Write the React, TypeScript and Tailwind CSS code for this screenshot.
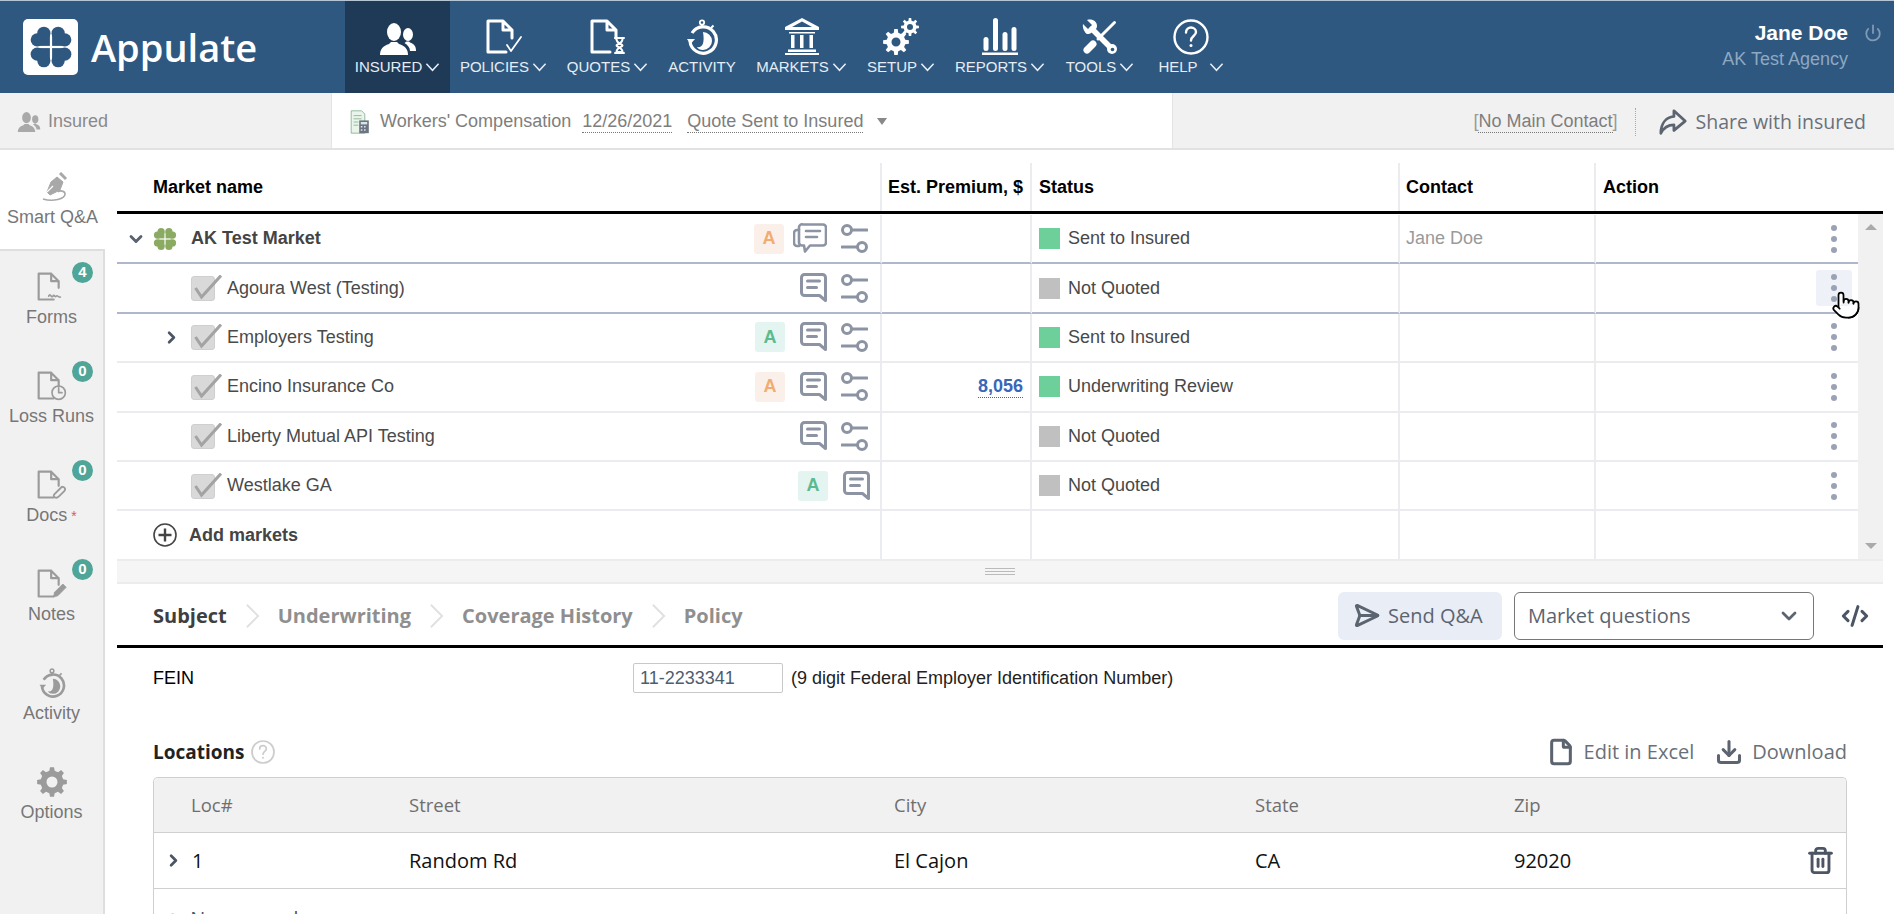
import { ChevronDown, ChevronRight, CodeXml, Download, File, Pointer, Power, SendHorizontal, Trash2 } from 'lucide-react'
import type { ReactNode } from 'react'

// builds a cog outline, used by the SETUP and Options icons
function gear(cx: number, cy: number, outer: number, inner: number, hole: number, teeth: number) {
  const pts: string[] = []
  const step = (Math.PI * 2) / teeth
  for (let i = 0; i < teeth; i++) {
    const a = i * step
    const list: [number, number][] = [
      [a - step * 0.3, inner],
      [a - step * 0.17, outer],
      [a + step * 0.17, outer],
      [a + step * 0.3, inner],
    ]
    list.forEach(([t, r]) => pts.push(`${(cx + Math.cos(t) * r).toFixed(2)} ${(cy + Math.sin(t) * r).toFixed(2)}`))
  }
  return `M${pts.join('L')}Z M${cx + hole} ${cy}a${hole} ${hole} 0 1 0 ${-hole * 2} 0a${hole} ${hole} 0 1 0 ${hole * 2} 0Z`
}

function Clover({ color, className }: { color: string; className: string }) {
  const leaf = (
    <g fill={color}>
      <circle cx="13.5" cy="7.5" r="6" />
      <circle cx="7.5" cy="13.5" r="6" />
      <rect x="8" y="8" width="11" height="11" />
    </g>
  )
  return (
    <svg viewBox="0 0 40 40" className={className}>
      {[0, 90, 180, 270].map((r) => (
        <g key={r} transform={`rotate(${r} 20 20)`}>
          {leaf}
        </g>
      ))}
    </svg>
  )
}

function UsersIcon({ className }: { className: string }) {
  return (
    <svg viewBox="0 0 36 32" fill="currentColor" className={className}>
      <ellipse cx="14" cy="9" rx="7" ry="9" />
      <path d="M0 32c0-6 3-9 9-11l2-2h6l2 2c6 2 9 5 9 11z" />
      <ellipse cx="28" cy="11.5" rx="5" ry="6.5" />
      <path d="M30 28h6c0-5-2-7-6-8.500l-1-1h-2.500l-2 1.500c3 2 5.500 4.500 5.500 8z" />
    </svg>
  )
}

function DocBase({ children, className, sw = 3 }: { children?: ReactNode; className: string; sw?: number }) {
  return (
    <svg viewBox="0 0 36 36" fill="none" stroke="currentColor" strokeLinecap="round" strokeLinejoin="round" className={className}>
      <path d="M20 33H2V2h15l9 9v8M17 2v9h9" strokeWidth={sw} />
      {children}
    </svg>
  )
}

function Stopwatch({ className }: { className: string }) {
  return (
    <svg viewBox="0 0 32 36" fill="none" stroke="currentColor" className={className}>
      <circle cx="16" cy="3.500" r="2.200" strokeWidth="1.800" />
      <path d="M16 6v3M25 9l2.500-2.500" strokeWidth="2" />
      <path d="M6 14a13.200 13.200 0 1 1-2 8" strokeWidth="3.200" />
      <path d="M1 20l3.500 5L9 20z" fill="currentColor" stroke="none" />
      <path d="M17 13a9 9 0 0 1 0 18c-3 0-5-1-6-3 5 1 8-3 6-15z" fill="currentColor" stroke="none" />
    </svg>
  )
}

function BankIcon({ className }: { className: string }) {
  return (
    <svg viewBox="0 0 34 37" fill="currentColor" className={className}>
      <path d="M17 0L34 9v3H0V9zM17 3.500L7 9h20z" fillRule="evenodd" />
      <path d="M4 14h26v1.500H4zM6 17h3.500v13H6zM15 17h3.500v13H15zM24.500 17H28v13h-3.500zM3 31.500h28V34H3zM0 35h34v2H0z" />
    </svg>
  )
}

function GearsIcon({ className }: { className: string }) {
  return (
    <svg viewBox="0 0 36 37" fill="currentColor" className={className}>
      <path fillRule="evenodd" d={gear(13, 24, 13, 9.500, 4.500, 8)} />
      <path fillRule="evenodd" d={gear(27, 9, 9, 6.500, 3, 8)} />
    </svg>
  )
}

function BarsIcon({ className }: { className: string }) {
  return (
    <svg viewBox="0 0 36 37" fill="currentColor" className={className}>
      <rect x="1.500" y="19" width="5" height="14" rx="2.500" />
      <rect x="11" y="0" width="5" height="33" rx="2.500" />
      <rect x="20.500" y="14" width="5" height="19" rx="2.500" />
      <rect x="29.500" y="9" width="5" height="24" rx="2.500" />
      <rect x="0" y="34.500" width="36" height="2.500" />
    </svg>
  )
}

function ToolsIcon({ className }: { className: string }) {
  return (
    <svg viewBox="0 0 36 36" fill="none" stroke="currentColor" strokeLinecap="round" className={className}>
      <path d="M32.500 3.500L16 20" strokeWidth="3" />
      <path d="M11 25L5 31" strokeWidth="7" />
      <path d="M10 10l20 20" strokeWidth="5.500" />
      <path d="M1 5l5 5 4-4-5-5c5-1.500 10 1 10 6 0 1-.3 2-1 3l-5 4c-1 .6-2 1-3.500 1C4 15 0 10 1 5z" fill="currentColor" stroke="none" />
      <circle cx="30" cy="30" r="5" fill="currentColor" stroke="none" />
      <circle cx="30.500" cy="30.500" r="1.800" fill="#2f5880" stroke="none" />
    </svg>
  )
}

function HelpIcon({ className, sw = 2.4 }: { className: string; sw?: number }) {
  return (
    <svg viewBox="0 0 36 36" fill="none" stroke="currentColor" strokeLinecap="round" className={className}>
      <circle cx="18" cy="18" r="16.500" strokeWidth={sw} />
      <path d="M13 13.500c0-3 2.300-5 5-5s5 2 5 4.500c0 4-5 4-5 8.500" strokeWidth={sw} />
      <circle cx="18" cy="26.500" r="1.500" fill="currentColor" stroke="none" />
    </svg>
  )
}

function CommentIcon({ className }: { className: string }) {
  return (
    <svg viewBox="0 0 27 30" fill="none" stroke="#8c93a3" strokeWidth="3" strokeLinecap="round" strokeLinejoin="round" className={className}>
      <path d="M4.500 1.500h18a3 3 0 0 1 3 3v23l-6-5h-15a3 3 0 0 1-3-3v-15a3 3 0 0 1 3-3z" />
      <path d="M7.500 8h12M7.500 14.500h9" />
    </svg>
  )
}

function CommentsIcon({ className }: { className: string }) {
  return (
    <svg viewBox="0 0 34 31" fill="none" stroke="#8c93a3" strokeWidth="2.600" strokeLinecap="round" strokeLinejoin="round" className={className}>
      <path d="M10 1.500h20a3 3 0 0 1 3 3v15a3 3 0 0 1-3 3H17l-5 6-1-6H9a3 3 0 0 1-3-3v-15a3 3 0 0 1 4-3z" />
      <path d="M6 7H4a3 3 0 0 0-3 3v10a3 3 0 0 0 3 3h2" />
      <path d="M13 8h14M13 14h11" />
    </svg>
  )
}

function SliderIcon({ className }: { className: string }) {
  return (
    <svg viewBox="0 0 27 29" fill="none" stroke="#8c93a3" strokeWidth="3" strokeLinecap="round" className={className}>
      <circle cx="6" cy="6" r="4.500" />
      <path d="M11 6h15M1 23h15" />
      <circle cx="21" cy="23" r="4.500" />
    </svg>
  )
}

function CheckIcon() {
  return (
    <svg viewBox="0 0 31 26" className="h-[26px] w-[31px]" fill="none">
      <rect x="0.500" y="1.500" width="23" height="24" rx="2.500" fill="#d9d9d9" stroke="#cfcfcf" />
      <path d="M4.500 13l6 9L30 0.500" stroke="#a3a3a3" strokeWidth="3" />
    </svg>
  )
}

function NavChevron() {
  return (
    <svg viewBox="0 0 16 10" className="ml-[3px] h-[10px] w-[15px]" fill="none" stroke="currentColor" strokeWidth="1.600">
      <path d="M1.500 1.500L8 8.500l6.500-7" />
    </svg>
  )
}

const NAV = [
  { label: 'INSURED', w: 'w-[105px]', active: true, icon: <UsersIcon className="h-[32px] w-[36px]" /> },
  {
    label: 'POLICIES',
    w: 'w-[107px]',
    icon: (
      <DocBase className="h-[36px] w-[36px]">
        <path d="M21 26l4 6L35 18" strokeWidth="1.800" />
      </DocBase>
    ),
  },
  {
    label: 'QUOTES',
    w: 'w-[101px]',
    icon: (
      <DocBase className="h-[36px] w-[36px]">
        <path d="M25 19h9M25 34h9M26.500 20c0 5 6 5 6 6.500s-6 1.500-6 6.500h6c0-5-6-5-6-6.500s6-1.500 6-6.500" strokeWidth="2" />
      </DocBase>
    ),
  },
  { label: 'ACTIVITY', w: 'w-[88px]', noChevron: true, icon: <Stopwatch className="h-[36px] w-[32px]" /> },
  { label: 'MARKETS', w: 'w-[111px]', icon: <BankIcon className="h-[37px] w-[34px]" /> },
  { label: 'SETUP', w: 'w-[88px]', icon: <GearsIcon className="h-[37px] w-[36px]" /> },
  { label: 'REPORTS', w: 'w-[110px]', icon: <BarsIcon className="h-[37px] w-[36px]" /> },
  { label: 'TOOLS', w: 'w-[90px]', icon: <ToolsIcon className="h-[36px] w-[36px]" /> },
  { label: 'HELP', w: 'w-[92px]', wide: true, icon: <HelpIcon className="h-[36px] w-[36px]" /> },
]

type Row = {
  name: string
  leaf: boolean
  expand?: boolean
  badge?: 'orange' | 'green'
  slider?: boolean
  premium?: string
  status: string
  done: boolean
  contact?: string
  line: string
}

const ROWS: Row[] = [
  { name: 'AK Test Market', leaf: false, badge: 'orange', slider: true, status: 'Sent to Insured', done: true, contact: 'Jane Doe', line: 'border-[#aeb7cb]' },
  { name: 'Agoura West (Testing)', leaf: true, slider: true, status: 'Not Quoted', done: false, line: 'border-[#aeb7cb]' },
  { name: 'Employers Testing', leaf: true, expand: true, badge: 'green', slider: true, status: 'Sent to Insured', done: true, line: 'border-[#eaecf0]' },
  { name: 'Encino Insurance Co', leaf: true, badge: 'orange', slider: true, premium: '8,056', status: 'Underwriting Review', done: true, line: 'border-[#eaecf0]' },
  { name: 'Liberty Mutual API Testing', leaf: true, slider: true, status: 'Not Quoted', done: false, line: 'border-[#eaecf0]' },
  { name: 'Westlake GA', leaf: true, badge: 'green', status: 'Not Quoted', done: false, line: 'border-[#eaecf0]' },
]

const COLS = 'grid grid-cols-[765px_150px_368px_196px_262px]'

function Dots() {
  return (
    <div className="flex flex-col gap-[5px]">
      <span className="h-[6px] w-[6px] rounded-full bg-[#9aa3b5]" />
      <span className="h-[6px] w-[6px] rounded-full bg-[#9aa3b5]" />
      <span className="h-[6px] w-[6px] rounded-full bg-[#9aa3b5]" />
    </div>
  )
}

function MarketRow({ row, hover }: { row: Row; hover: boolean }) {
  const cell = `h-[49.4px] border-b-2 border-r-2 border-r-[#eaecf0] ${row.line}`
  return (
    <div className={COLS}>
      <div className={`${cell} flex items-center`}>
        {row.leaf ? (
          <>
            <div className="flex w-[74px] justify-end pr-[10px] text-[#4c5564]">
              {row.expand && <ChevronRight size={19} strokeWidth={3.4} />}
            </div>
            <div className="w-[36px]">
              <CheckIcon />
            </div>
            <span className="text-[18px] text-[#4a4a4a]">{row.name}</span>
          </>
        ) : (
          <>
            <div className="w-[36px] pl-[9px] text-[#5a6270]">
              <ChevronDown size={20} strokeWidth={3.4} />
            </div>
            <div className="w-[38px]">
              <Clover color="#8bab62" className="h-[24px] w-[24px]" />
            </div>
            <span className="text-[18px] font-bold text-[#444]">{row.name}</span>
          </>
        )}
        <div className={`ml-auto flex items-center ${row.slider ? 'pr-[12px]' : 'pr-[10px]'}`}>
          {row.badge && (
            <span
              className={`flex h-[30px] w-[30px] items-center justify-center rounded-[3px] text-[18px] font-bold ${
                row.badge === 'orange' ? 'bg-[#fbf0e9] text-[#f2ac72]' : 'bg-[#e3f4f1] text-[#5dba8e]'
              } ${row.leaf ? 'mr-[15px]' : 'mr-[9px]'}`}
            >
              A
            </span>
          )}
          {row.leaf ? <CommentIcon className="h-[30px] w-[27px]" /> : <CommentsIcon className="h-[31px] w-[34px]" />}
          {row.slider && <SliderIcon className="ml-[14px] h-[29px] w-[27px]" />}
        </div>
      </div>
      <div className={`${cell} flex items-center justify-end pr-[7px]`}>
        {row.premium && <span className="border-b border-dotted border-[#3a66b8] text-[18px] font-bold leading-[22px] text-[#3a66b8]">{row.premium}</span>}
      </div>
      <div className={`${cell} flex items-center gap-[8px] pl-[7px]`}>
        <span className={`h-[21px] w-[21px] ${row.done ? 'bg-[#6dcf9a]' : 'bg-[#c0c0c0]'}`} />
        <span className="text-[18px] text-[#484848]">{row.status}</span>
      </div>
      <div className={`${cell} flex items-center pl-[6px] text-[18px] text-[#9a9a9a]`}>{row.contact}</div>
      <div className={`h-[49.4px] border-b-2 ${row.line} relative flex items-center justify-end pr-[6px]`}>
        <div className={`flex h-[36px] w-[36px] items-center justify-center rounded-[3px] ${hover ? 'bg-[#eef1f7]' : ''}`}>
          <Dots />
        </div>
        {hover && <Pointer size={30} strokeWidth={1.4} className="absolute left-[235px] top-[26px] fill-white text-black" />}
      </div>
    </div>
  )
}

const SIDE = [
  { label: 'Forms', count: 4, icon: <path d="M14 29c2-5 3 3 5 0s2 2 4 0 2 2 5 1" strokeWidth="2" /> },
  {
    label: 'Loss Runs',
    count: 0,
    icon: (
      <>
        <circle cx="26" cy="26" r="8" strokeWidth="2" />
        <path d="M26 21v5h4" strokeWidth="2" />
      </>
    ),
  },
  { label: 'Docs', count: 0, star: true, icon: <path d="M30 20l-9 9c-3 3 2 6 5 3l7-7c2-3-1-6-4-4l-8 8" strokeWidth="2.200" /> },
  { label: 'Notes', count: 0, icon: <path d="M20 33l1-5 10-10 4 4-10 10z" fill="currentColor" strokeWidth="1" /> },
]

function Sidebar() {
  return (
    <aside className="flex w-[105px] shrink-0 flex-col">
      <div className="flex h-[99px] flex-col items-center bg-white pt-[22px] text-[#8a8a8a]">
        <svg viewBox="0 0 30 30" className="h-[30px] w-[30px]" fill="none" stroke="#a8a8a8">
          <path d="M19 5l6 5-3 8-10 5-3-3 4-10z" fill="#a8a8a8" />
          <path d="M22 1l6 6" strokeWidth="3" />
          <path d="M9 20l6-6" stroke="#fff" strokeWidth="1.200" />
          <path d="M5 27c10 3 22 0 22-5 0-3-5-4-7-2" strokeWidth="1.600" />
        </svg>
        <span className="mt-[5px] text-[18px] leading-[20px] text-[#777]">Smart Q&amp;A</span>
      </div>
      <div className="flex-1 border-r-2 border-t-2 border-[#dedede] bg-[#f2f1f2] pt-[1px]">
        {SIDE.map((s) => (
          <div key={s.label} className="relative flex h-[99px] flex-col items-center pt-[20px] text-[#9b9b9b]">
            <span className="absolute left-[72px] top-[10px] flex h-[21px] w-[21px] items-center justify-center rounded-full bg-[#4fa598] text-[15px] font-bold text-white">
              {s.count}
            </span>
            <DocBase className="h-[30px] w-[30px]" sw={2.600}>
              {s.icon}
            </DocBase>
            <span className="mt-[5px] text-[18px] leading-[20px] text-[#777]">
              {s.label}
              {s.star && <span className="ml-[4px] text-[14px] text-[#e05a4a]">*</span>}
            </span>
          </div>
        ))}
        <div className="flex h-[99px] flex-col items-center pt-[20px] text-[#9b9b9b]">
          <Stopwatch className="h-[30px] w-[30px]" />
          <span className="mt-[5px] text-[18px] leading-[20px] text-[#777]">Activity</span>
        </div>
        <div className="flex h-[99px] flex-col items-center pt-[20px]">
          <svg viewBox="0 0 30 30" className="h-[30px] w-[30px]" fill="#9b9b9b">
            <path fillRule="evenodd" d={gear(15, 15, 15, 11.500, 5.500, 8)} />
          </svg>
          <span className="mt-[5px] text-[18px] leading-[20px] text-[#777]">Options</span>
        </div>
      </div>
    </aside>
  )
}

function TabArrow() {
  return (
    <svg viewBox="0 0 16 28" className="mx-[18px] h-[28px] w-[15px]" fill="none" stroke="#e0e0e0" strokeWidth="2">
      <path d="M2 2l12 12L2 26" />
    </svg>
  )
}

export default function App() {
  return (
    <div className="flex h-[914px] w-[1894px] flex-col overflow-hidden bg-white font-['Liberation_Sans',sans-serif]">
      <header className="flex h-[93px] shrink-0 border-t border-[#b4c5d6] bg-[#2f5880] text-white">
        <div className="flex w-[345px] shrink-0 items-center pl-[23px]">
          <div className="flex h-[56px] w-[55px] items-center justify-center rounded-[5px] bg-white">
            <Clover color="#2f5880" className="h-[44px] w-[44px]" />
          </div>
          <span className="ml-[13px] font-['Open_Sans',sans-serif] text-[38px] font-semibold leading-none">Appulate</span>
        </div>
        {NAV.map((n) => (
          <div key={n.label} className={`flex ${n.w} shrink-0 flex-col items-center ${n.active ? 'bg-[#1f3a57]' : ''}`}>
            <div className="mt-[17px] flex h-[37px] items-end">{n.icon}</div>
            <div className="mt-[2px] flex items-center text-[15px] leading-[20px] text-[#e6edf4]">
              {n.label}
              {!n.noChevron && <span className={n.wide ? 'ml-[8px]' : ''}><NavChevron /></span>}
            </div>
          </div>
        ))}
        <div className="ml-auto flex pr-[12px] pt-[19px]">
          <div className="flex flex-col items-end">
            <span className="text-[21px] font-bold leading-[26px]">Jane Doe</span>
            <span className="text-[18px] leading-[26px] text-[#8ea8c2]">AK Test Agency</span>
          </div>
          <Power size={18} strokeWidth={2.400} className="ml-[16px] mt-[4px] text-[#7f9ab5]" />
        </div>
      </header>

      <div className="flex h-[57px] shrink-0 border-b-2 border-[#e2e2e2] bg-[#f2f1f2] pt-[2px] text-[18px] text-[#7e7e7e]">
        <div className="flex w-[331px] items-center pl-[17px]">
          <UsersIcon className="h-[20px] w-[24px] text-[#a9a9a9]" />
          <span className="ml-[7px] text-[#8a8a8a]">Insured</span>
        </div>
        <div className="-mt-[2px] flex w-[842px] items-center border-l border-r border-[#e4e4e4] bg-white pl-[16px] pt-[2px]">
          <svg viewBox="0 0 24 30" className="h-[24px] w-[24px]">
            <path d="M1 1h13l4 4v24H1z" fill="#eaf4ea" stroke="#7fb08a" />
            <path d="M4 7h10M4 11h10M4 15h6M4 19h6" stroke="#7fb08a" />
            <rect x="11" y="13" width="12" height="16" fill="#6b7480" />
            <rect x="13" y="15" width="8" height="3" fill="#dbe4ea" />
            <path d="M13 21h2M17 21h2M13 25h2M17 25h2" stroke="#dbe4ea" strokeWidth="2" />
          </svg>
          <span className="ml-[8px]">Workers' Compensation</span>
          <span className="ml-[11px] border-b border-dotted border-[#777] leading-[21px]">12/26/2021</span>
          <span className="ml-[15px] border-b border-dotted border-[#777] leading-[21px]">Quote Sent to Insured</span>
          <span className="ml-[14px] h-0 w-0 border-x-[5.500px] border-t-[7px] border-x-transparent border-t-[#888]" />
        </div>
        <div className="flex flex-1 items-center justify-end pr-[28px]">
          <span className="text-[#9a9a9a]">[</span>
          <span className="border-b border-dotted border-[#777] leading-[21px]">No Main Contact</span>
          <span className="text-[#9a9a9a]">]</span>
          <span className="ml-[17px] mr-[23px] h-[28px] border-l border-dotted border-[#aaa]" />
          <svg viewBox="0 0 30 28" className="mr-[9px] h-[28px] w-[28px]" fill="none" stroke="#5c6470" strokeWidth="3" strokeLinejoin="round">
            <path d="M16 2l12 11-12 10v-6C10 17 5 20 2 26 2 15 8 9 16 8z" />
          </svg>
          <span className="font-['Open_Sans',sans-serif] text-[19.5px] text-[#6a7078]">Share with insured</span>
        </div>
      </div>

      <div className="flex min-h-0 flex-1">
        <Sidebar />
        <main className="min-w-0 flex-1 pl-[12px] pr-[11px]">
          <div className={`${COLS} h-[64px] border-b-[3px] border-black pt-[13px] text-[18px] font-bold text-black`}>
            <div className="flex h-[48px] items-center border-r-2 border-[#eaecf0] pl-[36px]">Market name</div>
            <div className="flex h-[48px] items-center border-r-2 border-[#eaecf0] pl-[6px]">Est. Premium, $</div>
            <div className="flex h-[48px] items-center border-r-2 border-[#eaecf0] pl-[7px]">Status</div>
            <div className="flex h-[48px] items-center border-r-2 border-[#eaecf0] pl-[6px]">Contact</div>
            <div className="flex h-[48px] items-center pl-[7px]">Action</div>
          </div>

          <div className="flex h-[345px]">
            <div className="w-[1741px] shrink-0 pt-[1px]">
              {ROWS.map((r, i) => (
                <MarketRow key={r.name} row={r} hover={i === 1} />
              ))}
              <div className={COLS}>
                <div className="flex h-[48px] items-center border-r-2 border-[#eaecf0] pl-[36px]">
                  <svg viewBox="0 0 24 24" className="h-[24px] w-[24px]" fill="none" stroke="#444">
                    <circle cx="12" cy="12" r="11" strokeWidth="1.600" />
                    <path d="M12 5.500v13M5.500 12h13" strokeWidth="2.400" />
                  </svg>
                  <span className="ml-[12px] text-[18px] font-bold text-[#444]">Add markets</span>
                </div>
                <div className="h-[48px] border-r-2 border-[#eaecf0]" />
                <div className="h-[48px] border-r-2 border-[#eaecf0]" />
                <div className="h-[48px] border-r-2 border-[#eaecf0]" />
                <div className="h-[48px]" />
              </div>
            </div>
            <div className="flex flex-1 flex-col items-center justify-between bg-[#f1f1f1] py-[10px]">
              <span className="h-0 w-0 border-x-[6px] border-b-[6px] border-x-transparent border-b-[#aaa]" />
              <span className="h-0 w-0 border-x-[6px] border-t-[6px] border-x-transparent border-t-[#aaa]" />
            </div>
          </div>

          <div className="flex h-[25px] flex-col items-center justify-center gap-[2px] border-y-2 border-[#ececec] bg-[#f5f5f5]">
            <span className="h-[1px] w-[30px] bg-[#bbb]" />
            <span className="h-[1px] w-[30px] bg-[#bbb]" />
            <span className="h-[1px] w-[30px] bg-[#bbb]" />
          </div>

          <div className="flex h-[64px] items-center border-b-[3px] border-black pl-[36px] pr-[14px] pt-[2px] font-['Open_Sans',sans-serif]">
            <span className="text-[20px] font-bold text-[#3f3f3f]">Subject</span>
            <TabArrow />
            <span className="text-[20px] font-bold text-[#8f8f8f]">Underwriting</span>
            <TabArrow />
            <span className="text-[20px] font-bold text-[#8f8f8f]">Coverage History</span>
            <TabArrow />
            <span className="text-[20px] font-bold text-[#8f8f8f]">Policy</span>

            <div className="ml-auto flex h-[48px] w-[164px] items-center rounded-[6px] bg-[#e9edf5] pl-[15px] text-[#5c6470]">
              <SendHorizontal size={27} strokeWidth={2.600} />
              <span className="ml-[8px] text-[20px]">Send Q&amp;A</span>
            </div>
            <div className="ml-[12px] flex h-[48px] w-[300px] items-center justify-between rounded-[6px] border border-[#777] bg-white pl-[13px] pr-[12px] text-[#5c6470]">
              <span className="text-[20px]">Market questions</span>
              <ChevronDown size={24} strokeWidth={2.800} />
            </div>
            <CodeXml size={28} strokeWidth={2.600} className="ml-[27px] text-[#4c5564]" />
          </div>

          <div className="px-[36px]">
            <div className="mt-[15px] flex h-[30px] items-center">
              <span className="w-[480px] text-[18px] text-black">FEIN</span>
              <div className="flex h-[30px] w-[150px] items-center rounded-[2px] border border-[#c8c8c8] pl-[6px] text-[18px] text-[#4a6070]">11-2233341</div>
              <span className="ml-[8px] text-[18px] text-[#222]">(9 digit Federal Employer Identification Number)</span>
            </div>

            <div className="mt-[44px] flex h-[30px] items-center font-['Open_Sans',sans-serif]">
              <span className="text-[19px] font-bold text-[#222]">Locations</span>
              <HelpIcon className="ml-[7px] h-[24px] w-[24px] text-[#cdcdcd]" sw={2.600} />
              <File size={28} strokeWidth={2.600} className="ml-auto text-[#5c6470]" />
              <span className="ml-[9px] text-[20px] text-[#6a7078]">Edit in Excel</span>
              <Download size={28} strokeWidth={2.600} className="ml-[21px] text-[#5c6470]" />
              <span className="ml-[9px] text-[20px] text-[#6a7078]">Download</span>
            </div>

            <div className="mt-[10px] rounded-t-[5px] border-x border-t border-[#cfcfcf] font-['Open_Sans',sans-serif]">
              <div className="grid h-[55px] grid-cols-[255px_485px_361px_259px_1fr] items-center rounded-t-[5px] border-b border-[#cfcfcf] bg-[#f2f1f2] text-[18.5px] text-[#6f6f6f]">
                <span className="pl-[37px]">Loc#</span>
                <span>Street</span>
                <span>City</span>
                <span>State</span>
                <span>Zip</span>
              </div>
              <div className="grid h-[56px] grid-cols-[255px_485px_361px_259px_1fr] items-center border-b border-[#cfcfcf] text-[20px] text-[#111]">
                <span className="flex items-center pl-[10px]">
                  <ChevronRight size={19} strokeWidth={3.4} className="text-[#4c5564]" />
                  <span className="ml-[9px]">1</span>
                </span>
                <span>Random Rd</span>
                <span>El Cajon</span>
                <span>CA</span>
                <span className="flex items-center justify-between pr-[11px]">
                  92020
                  <Trash2 size={29} strokeWidth={2.400} className="text-[#4c5564]" />
                </span>
              </div>
              <div className="flex h-[60px] items-center pl-[10px] text-[20px] text-[#4c5564]">
                <span className="text-[30px] text-[#2a5ea8]">+</span>
                <span className="ml-[9px]">New record</span>
              </div>
            </div>
          </div>
        </main>
      </div>
    </div>
  )
}
